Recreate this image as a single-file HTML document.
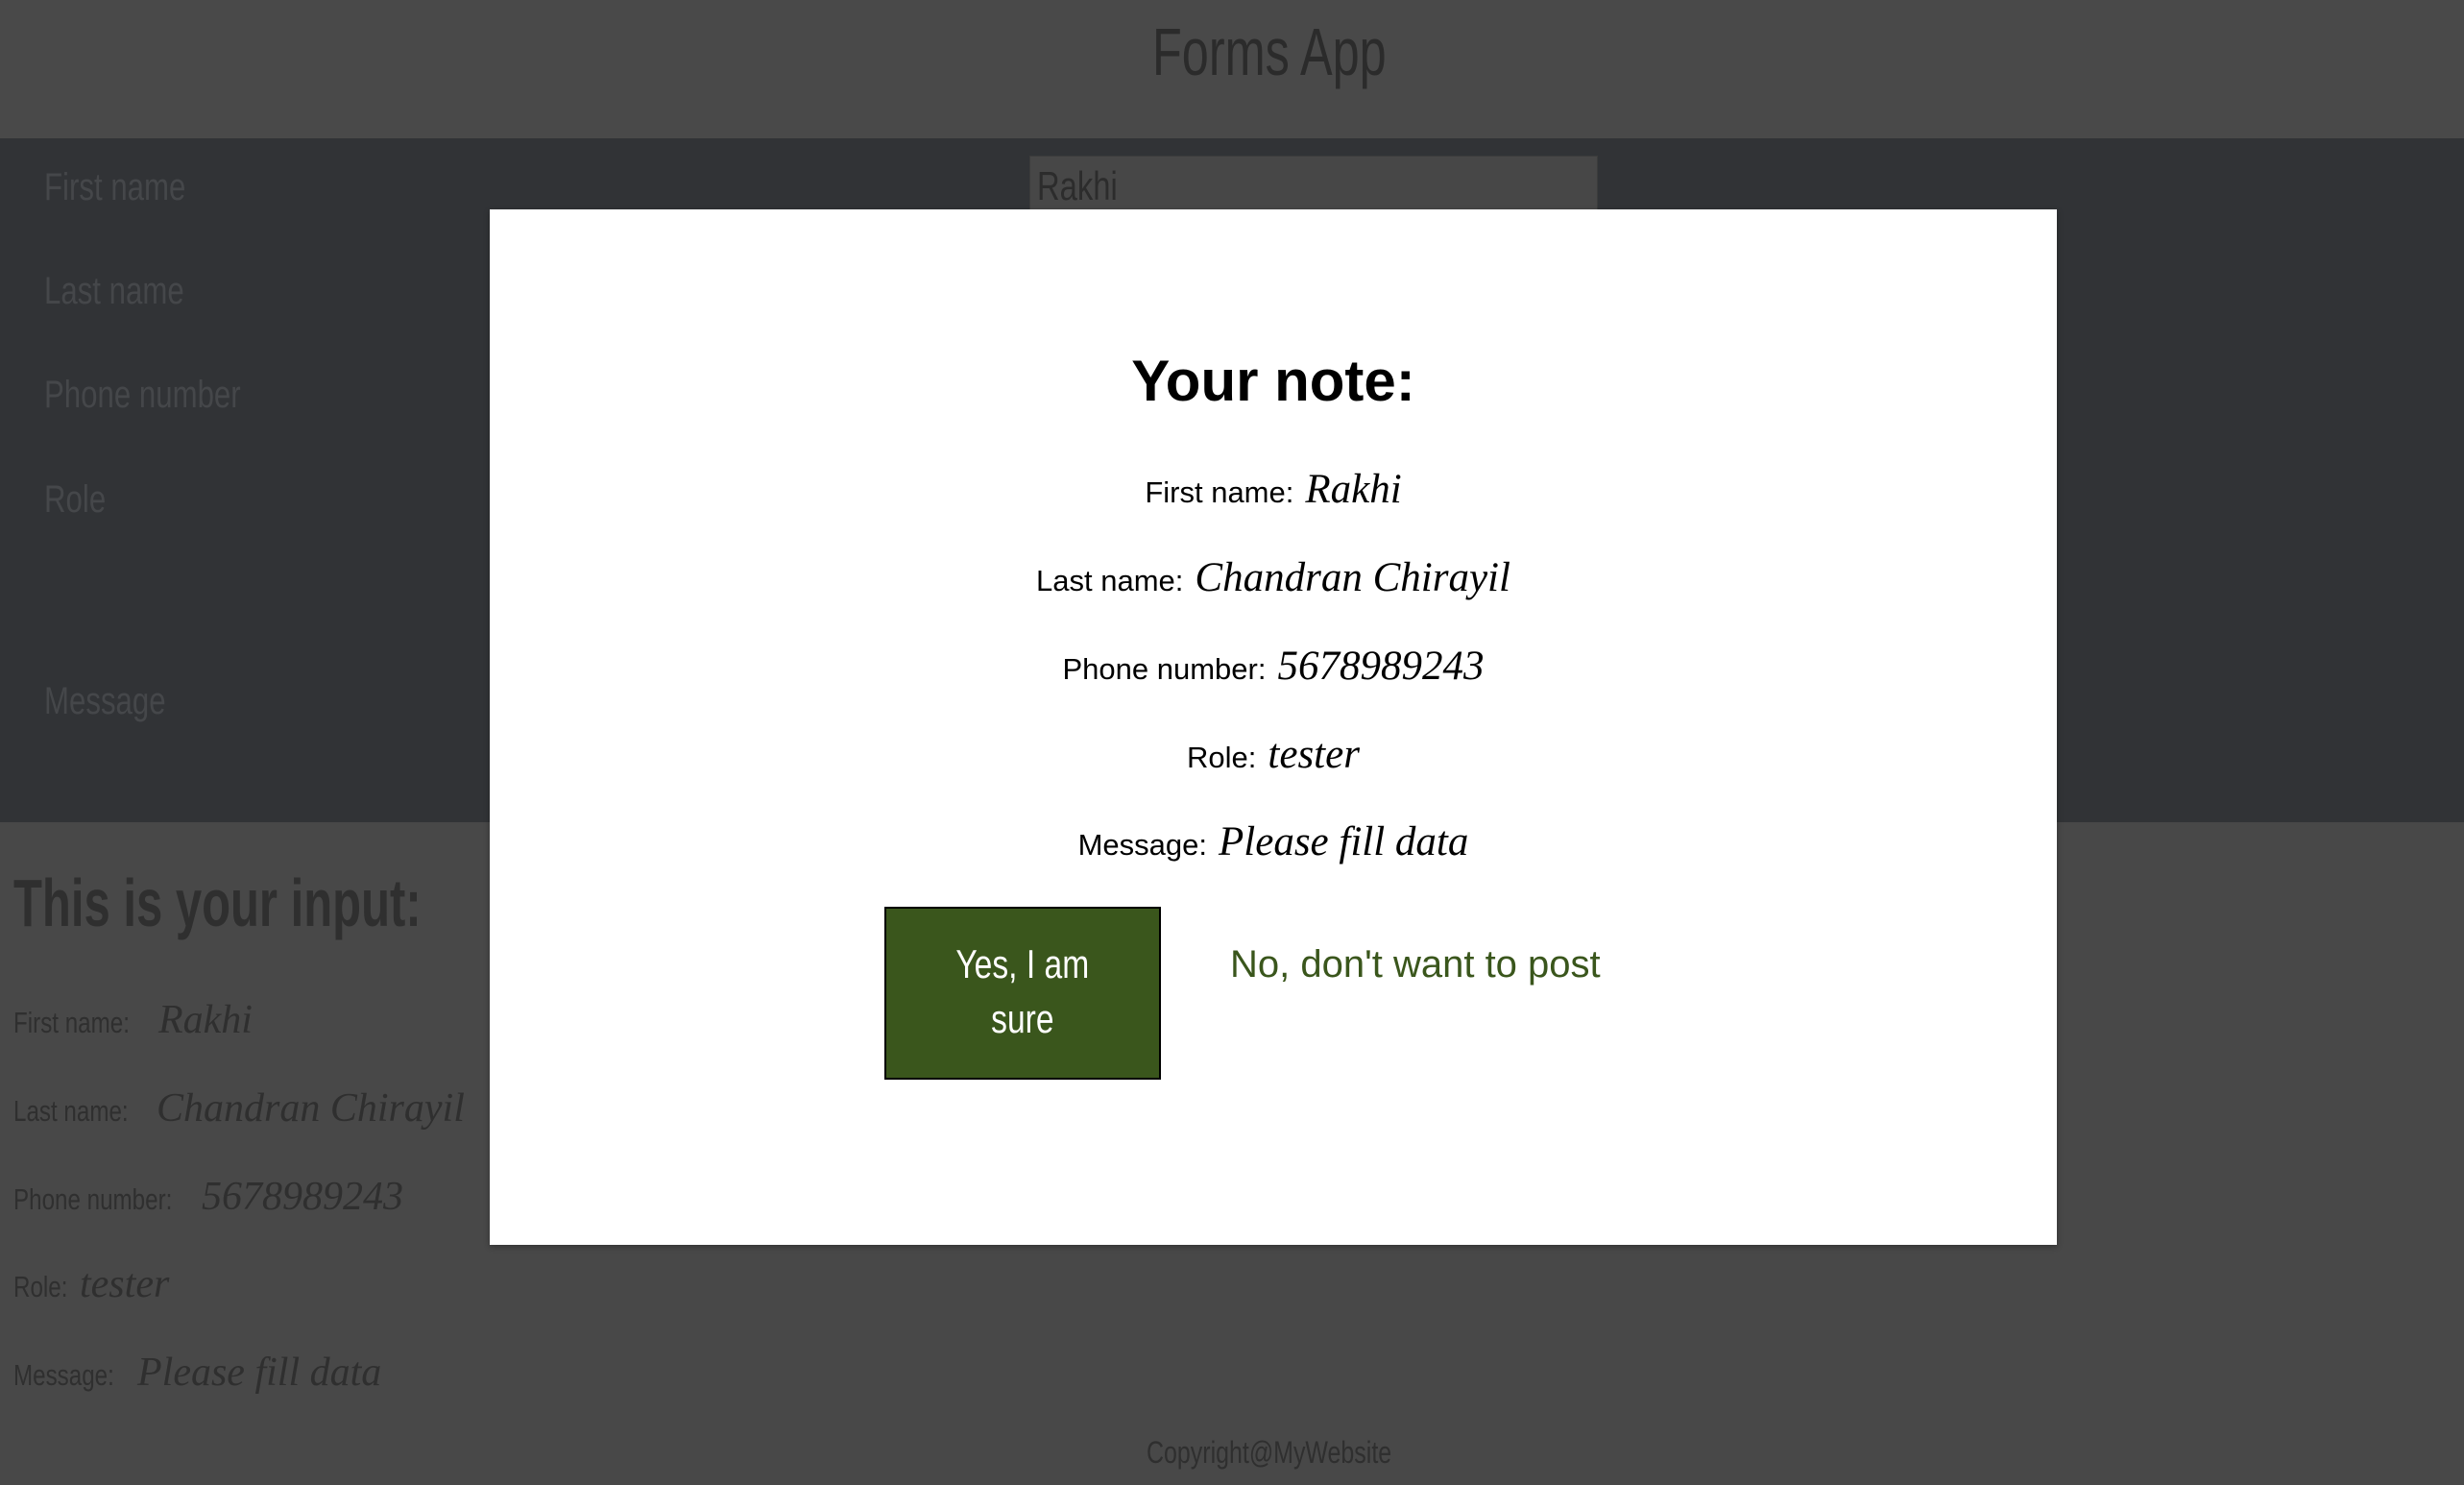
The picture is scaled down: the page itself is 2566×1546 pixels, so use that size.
<!DOCTYPE html>
<html><head><meta charset="utf-8"><style>
*{margin:0;padding:0;box-sizing:border-box}
body{width:2566px;height:1546px;overflow:hidden;background:#484848;font-family:"Liberation Sans",sans-serif;position:relative}
.abs{position:absolute;white-space:nowrap}
.n{display:inline-block;transform:scaleX(.78);transform-origin:left center;font-family:"Liberation Sans Narrow","Liberation Sans",sans-serif}
.hw{font-family:"Liberation Serif",serif;font-style:italic}
.lab{color:#45474a;font-size:40px;left:46px}
.in{color:#2f2f2f;left:14px}
.in .l{font-size:31px}
.m{left:510px;width:1632px;text-align:center;color:#000;font-size:31px}
.m .v{font-size:43px;margin-left:12px}
</style></head><body>
<div class="abs" style="left:0;top:0;width:2566px;height:144px;background:#494949"></div>
<div class="abs" style="left:1200px;top:14px;font-size:70px;color:#2b2b2b"><span class="n" style="transform:scaleX(.72)">Forms App</span></div>
<div class="abs" style="left:0;top:144px;width:2566px;height:712px;background:#313336"></div>
<div class="abs" style="left:1072px;top:162px;width:592px;height:70px;background:#474747;border:1px solid #3c3c3c"></div>
<div class="abs" style="left:1080px;top:170px;font-size:42px;color:#2c2c2c"><span class="n">Rakhi</span></div>
<div class="abs lab" style="top:173px"><span class="n">First name</span></div>
<div class="abs lab" style="top:281px"><span class="n">Last name</span></div>
<div class="abs lab" style="top:389px"><span class="n">Phone number</span></div>
<div class="abs lab" style="top:498px"><span class="n">Role</span></div>
<div class="abs lab" style="top:708px"><span class="n">Message</span></div>
<div class="abs" style="left:14px;top:900px;font-size:70px;color:#2f2f2f;font-weight:bold"><span class="n" style="transform:scaleX(.7)">This is your input:</span></div>
<div class="abs in" style="top:1047px"><span class="l n">First name:</span></div><div class="abs in hw" style="left:165px;top:1038px;font-size:42px">Rakhi</div>
<div class="abs in" style="top:1139px"><span class="l n">Last name:</span></div><div class="abs in hw" style="left:163px;top:1130px;font-size:42px">Chandran Chirayil</div>
<div class="abs in" style="top:1231px"><span class="l n">Phone number:</span></div><div class="abs in hw" style="left:210px;top:1222px;font-size:42px">5678989243</div>
<div class="abs in" style="top:1322px"><span class="l n">Role:</span></div><div class="abs in hw" style="left:83px;top:1313px;font-size:42px">tester</div>
<div class="abs in" style="top:1414px"><span class="l n">Message:</span></div><div class="abs in hw" style="left:143px;top:1405px;font-size:42px">Please fill data</div>
<div class="abs" style="left:1194px;top:1494px;font-size:32px;color:#2f2f2f"><span class="n">Copyright@MyWebsite</span></div>

<div class="abs" style="left:510px;top:218px;width:1632px;height:1078px;background:#fff;box-shadow:0 2px 6px rgba(0,0,0,.3)"></div>
<div class="abs m" style="top:362px;font-size:60px;font-weight:bold">Your note:</div>
<div class="abs m" style="top:485px">First name:<span class="v hw">Rakhi</span></div>
<div class="abs m" style="top:577px">Last name:<span class="v hw">Chandran Chirayil</span></div>
<div class="abs m" style="top:669px">Phone number:<span class="v hw">5678989243</span></div>
<div class="abs m" style="top:761px">Role:<span class="v hw">tester</span></div>
<div class="abs m" style="top:852px">Message:<span class="v hw">Please fill data</span></div>
<div class="abs" style="left:921px;top:944px;width:288px;height:180px;background:#3a561c;border:2px solid #000;color:#fff;font-size:42px;text-align:center;line-height:57px;padding-top:29px;white-space:normal"><span class="n" style="transform:scaleX(.8);transform-origin:center">Yes, I am</span><br><span class="n" style="transform:scaleX(.8);transform-origin:center">sure</span></div>
<div class="abs" style="left:1281px;top:982px;font-size:40px;color:#3a561c">No, don't want to post</div>
</body></html>
